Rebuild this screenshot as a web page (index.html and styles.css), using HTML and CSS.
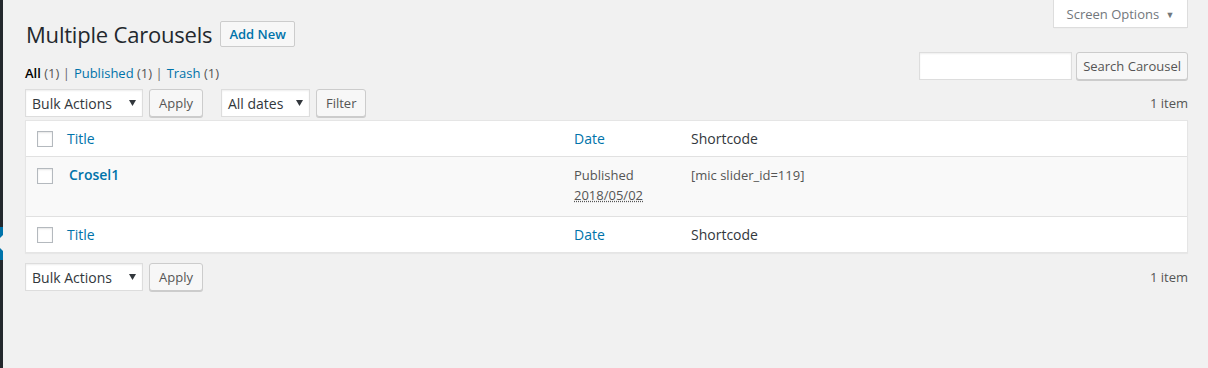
FILE: index.html
```html
<!DOCTYPE html>
<html lang="en">
<head>
  <meta charset="UTF-8">
  <title>Multiple Carousels</title>
  <link rel="stylesheet" href="styles.css">
</head>
<body>

  <div class="adminmenu">
    <div class="menu-dark"></div>
    <div class="menu-current"></div>
    <div class="menu-dark menu-rest"></div>
  </div>

  <div class="wrap">

    <div class="top">
      <div class="title-row">
        <h1>Multiple Carousels</h1>
        <a class="page-title-action" href="#">Add New</a>
      </div>
      <button class="screen-tab">Screen Options <span class="tab-arrow">&#9660;</span></button>
    </div>

    <div class="filters">
      <ul class="subsubsub">
        <li><a class="current" href="#">All <span class="count">(1)</span></a> |</li>
        <li><a href="#">Published <span class="count">(1)</span></a> |</li>
        <li><a href="#">Trash <span class="count">(1)</span></a></li>
      </ul>
      <div class="search-box">
        <input type="search" class="search-input">
        <button class="button">Search Carousel</button>
      </div>
    </div>

    <div class="tablenav">
      <div class="actions">
        <div class="select bulk">
          <span>Bulk Actions</span>
          <svg width="7" height="6" viewBox="0 0 7 6"><path d="M0 0h7L3.5 6z" fill="#32373c"/></svg>
        </div>
        <button class="button">Apply</button>
        <div class="select dates">
          <span>All dates</span>
          <svg width="7" height="6" viewBox="0 0 7 6"><path d="M0 0h7L3.5 6z" fill="#32373c"/></svg>
        </div>
        <button class="button">Filter</button>
      </div>
      <span class="displaying-num">1 item</span>
    </div>

    <table class="wp-list-table">
      <colgroup>
        <col class="col-check">
        <col class="col-title">
        <col class="col-date">
        <col>
      </colgroup>
      <thead>
        <tr>
          <td class="check-column"><span class="checkbox"></span></td>
          <th><a href="#">Title</a></th>
          <th><a href="#">Date</a></th>
          <th>Shortcode</th>
        </tr>
      </thead>
      <tbody>
        <tr>
          <td class="check-column"><span class="checkbox"></span></td>
          <td><strong><a href="#">Crosel1</a></strong></td>
          <td>Published<br><abbr title="2018/05/02 10:12:00 am">2018/05/02</abbr></td>
          <td>[mic slider_id=119]</td>
        </tr>
      </tbody>
      <tfoot>
        <tr>
          <td class="check-column"><span class="checkbox"></span></td>
          <th><a href="#">Title</a></th>
          <th><a href="#">Date</a></th>
          <th>Shortcode</th>
        </tr>
      </tfoot>
    </table>

    <div class="tablenav bottom">
      <div class="actions">
        <div class="select bulk">
          <span>Bulk Actions</span>
          <svg width="7" height="6" viewBox="0 0 7 6"><path d="M0 0h7L3.5 6z" fill="#32373c"/></svg>
        </div>
        <button class="button">Apply</button>
      </div>
      <span class="displaying-num">1 item</span>
    </div>

  </div>

</body>
</html>
```

FILE: styles.css
```css
body {
  font-family: 'Open Sans', 'Noto Sans', sans-serif;
  font-size: 13px;
  color: #444;
  background-color: #f1f1f1;
  margin: 0;
  padding: 0;
  display: flex;
  min-height: 368px;
}

a {
  color: #0073aa;
  text-decoration: none;
}

/* left admin menu strip */
.adminmenu {
  width: 3px;
  display: flex;
  flex-direction: column;
  flex-shrink: 0;
}

.menu-dark {
  height: 227px;
  background-color: #23282d;
}

.menu-rest {
  flex: 1;
}

.menu-current {
  height: 33px;
  background-color: #0073aa;
  position: relative;
}

.menu-current::after {
  content: "";
  position: absolute;
  right: 0;
  top: 8px;
  border: 8px solid transparent;
  border-right-color: #f1f1f1;
  border-left: 0;
  width: 0;
  height: 0;
}

.wrap {
  flex: 1;
  padding: 0 20px 0 22px;
}

/* title + screen options */
.top {
  display: flex;
  justify-content: space-between;
  align-items: flex-start;
}

.title-row {
  display: flex;
  align-items: center;
  gap: 8px;
  margin-top: 21px;
}

h1 {
  font-size: 22px;
  font-weight: 400;
  color: #23282d;
  margin: 0;
  padding: 0 0 0 1px;
  line-height: 26px;
  letter-spacing: -0.2px;
}

.page-title-action {
  display: block;
  height: 26px;
  box-sizing: border-box;
  padding: 0 8px;
  line-height: 24px;
  border: 1px solid #ccc;
  border-radius: 2px;
  background-color: #f7f7f7;
  font-size: 13px;
  font-weight: 600;
  color: #0073aa;
}

.screen-tab {
  font-family: inherit;
  font-size: 13px;
  color: #72777c;
  background-color: #fff;
  border: 1px solid #ddd;
  border-top: none;
  box-shadow: 0 1px 1px -1px rgba(0,0,0,0.1);
  width: 135px;
  height: 28px;
  padding: 0;
  cursor: pointer;
}

.tab-arrow {
  font-size: 9px;
  margin-left: 3px;
  position: relative;
  top: -1px;
}

/* views + search */
.filters {
  display: flex;
  justify-content: space-between;
  margin-top: 5px;
}

.subsubsub {
  list-style-type: none;
  margin: 0 0 -1px 0;
  padding: 0;
  display: flex;
  gap: 4px;
  align-self: flex-end;
  line-height: 16px;
  color: #666;
}

.subsubsub li {
  white-space: nowrap;
}

.subsubsub .current {
  color: #000;
  font-weight: 600;
}

.count {
  color: #555;
  font-weight: 400;
}

.search-box {
  display: flex;
  gap: 4px;
}

.search-input {
  width: 153px;
  height: 28px;
  box-sizing: border-box;
  border: 1px solid #ddd;
  box-shadow: inset 0 1px 2px rgba(0,0,0,0.07);
  background-color: #fff;
  margin: 0;
}

.button {
  font-family: inherit;
  font-size: 13px;
  color: #555;
  background-color: #f7f7f7;
  border: 1px solid #ccc;
  border-radius: 3px;
  box-shadow: 0 1px 0 #ccc;
  height: 28px;
  box-sizing: border-box;
  padding: 0 9px;
  cursor: pointer;
}

.search-box .button {
  padding: 0 6px;
}

/* table navigation */
.tablenav {
  display: flex;
  justify-content: space-between;
  align-items: center;
  margin-top: 9px;
  height: 28px;
}

.tablenav.bottom {
  margin-top: 10px;
}

.actions {
  display: flex;
  gap: 6px;
}

.actions .dates {
  margin-left: 12px;
}

.select {
  height: 28px;
  box-sizing: border-box;
  border: 1px solid #ddd;
  background-color: #fff;
  box-shadow: inset 0 1px 2px rgba(0,0,0,0.07);
  display: flex;
  align-items: center;
  justify-content: space-between;
  padding: 0 6px 0 6px;
  font-size: 14px;
  color: #32373c;
}

.select.bulk {
  width: 118px;
}

.select.dates {
  width: 89px;
}

.displaying-num {
  color: #555;
  font-size: 13px;
}

/* list table */
.wp-list-table {
  width: 100%;
  border-collapse: separate;
  border-spacing: 0;
  table-layout: fixed;
  background-color: #fff;
  border: 1px solid #e5e5e5;
  box-shadow: 0 1px 1px rgba(0,0,0,0.04);
  margin-top: 3px;
}

.col-check {
  width: 31px;
}

.col-title {
  width: 507px;
}

.col-date {
  width: 117px;
}

.wp-list-table th,
.wp-list-table td {
  text-align: left;
  vertical-align: top;
}

.wp-list-table thead th,
.wp-list-table tfoot th {
  font-size: 14px;
  font-weight: 400;
  color: #32373c;
  padding: 8px 10px;
  line-height: 19px;
}

.wp-list-table thead th,
.wp-list-table thead td {
  border-bottom: 1px solid #e1e1e1;
}

.wp-list-table tfoot th,
.wp-list-table tfoot td {
  border-top: 1px solid #e1e1e1;
}

.wp-list-table tbody td {
  background-color: #f9f9f9;
  color: #555;
  padding: 8px 10px 11px;
  line-height: 20px;
}

.wp-list-table tbody td strong {
  font-size: 14px;
  font-weight: 600;
  padding-left: 2px;
}

.wp-list-table td.check-column {
  padding: 10px 0 0 11px;
}

.wp-list-table tbody td.check-column {
  padding: 11px 0 0 11px;
}

.checkbox {
  display: block;
  width: 16px;
  height: 16px;
  box-sizing: border-box;
  border: 1px solid #b4b9be;
  background-color: #fff;
  box-shadow: inset 0 1px 2px rgba(0,0,0,0.1);
}

abbr {
  text-decoration: underline dotted;
}
```
